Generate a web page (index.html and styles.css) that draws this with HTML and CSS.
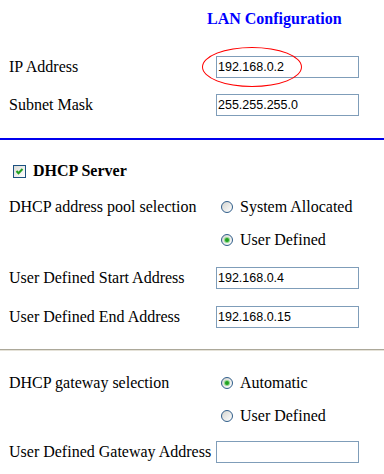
FILE: index.html
```html
<!DOCTYPE html>
<html lang="en">
<head>
    <meta charset="UTF-8">
    <meta name="viewport" content="width=device-width, initial-scale=1.0">
    <title>LAN Configuration</title>
    <link rel="stylesheet" href="styles.css">
</head>
<body>

    <h1 class="title">LAN Configuration</h1>

    <div class="section">
        <div class="row">
            <label for="ip">IP Address</label>
            <div class="field">
                <input class="text-box" id="ip" type="text" value="192.168.0.2">
                <!-- marca vermelha em volta do IP -->
                <span class="ellipse"></span>
            </div>
        </div>
        <div class="row">
            <label for="mask">Subnet Mask</label>
            <div class="field">
                <input class="text-box" id="mask" type="text" value="255.255.255.0">
            </div>
        </div>
    </div>

    <hr class="rule-blue">

    <div class="section dhcp">
        <div class="check-row">
            <span class="checkbox">
                <svg width="11" height="11" viewBox="0 0 11 11">
                    <path d="M2.5 5 L4.5 7.2 L8.5 3" fill="none" stroke="#21a121" stroke-width="2"/>
                </svg>
            </span>
            <strong>DHCP Server</strong>
        </div>

        <div class="row radio-row">
            <label>DHCP address pool selection</label>
            <span class="radio-opt"><span class="radio"></span>System Allocated</span>
        </div>
        <div class="row radio-row">
            <span></span>
            <span class="radio-opt"><span class="radio on"></span>User Defined</span>
        </div>

        <div class="row tall spaced">
            <label for="start">User Defined Start Address</label>
            <div class="field">
                <input class="text-box" id="start" type="text" value="192.168.0.4">
            </div>
        </div>
        <div class="row tall">
            <label for="end">User Defined End Address</label>
            <div class="field">
                <input class="text-box" id="end" type="text" value="192.168.0.15">
            </div>
        </div>
    </div>

    <hr class="rule-gray">

    <div class="section gateway">
        <div class="row radio-row">
            <label>DHCP gateway selection</label>
            <span class="radio-opt"><span class="radio on"></span>Automatic</span>
        </div>
        <div class="row radio-row">
            <span></span>
            <span class="radio-opt"><span class="radio"></span>User Defined</span>
        </div>
        <div class="row tall">
            <label for="gw">User Defined Gateway Address</label>
            <div class="field">
                <input class="text-box" id="gw" type="text" value="">
            </div>
        </div>
    </div>

</body>
</html>
```

FILE: styles.css
```css
body {
    font-family: "Liberation Serif", "Times New Roman", serif;
    font-size: 16px;
    color: #000;
    background-color: #fff;
    margin: 0;
    padding: 0;
}

.title {
    font-size: 16px;
    font-weight: bold;
    color: #0000ff;
    margin: 0;
    padding: 9px 0 0 207px;
    height: 39px;
    line-height: 20px;
}

.section {
    padding-left: 9px;
}

.row {
    display: grid;
    grid-template-columns: 207px 143px;
    align-items: center;
    height: 38px;
}

.row.tall {
    height: 39px;
}

.row.spaced {
    margin-top: 2px;
}

.radio-row {
    height: 33px;
}

.field {
    position: relative;
    height: 22px;
}

.text-box {
    box-sizing: border-box;
    width: 143px;
    height: 22px;
    margin: 0;
    padding: 0 1px;
    border: 1px solid #7f9db9;
    font-family: "Liberation Sans", Arial, sans-serif;
    font-size: 12.5px;
    color: #000;
    background-color: #fff;
    outline: none;
}

.ellipse {
    position: absolute;
    left: -14px;
    top: -9px;
    width: 100px;
    height: 40px;
    box-sizing: border-box;
    border: 1px solid #ff0000;
    border-radius: 50%;
}

.rule-blue {
    margin: 14px 0 0 0;
    border: none;
    height: 2px;
    background-color: #0000ee;
}

.rule-gray {
    margin: 13px 0 0 0;
    border: none;
    border-top: 1px solid #aca899;
    border-bottom: 1px solid #e5e2d8;
    height: 0;
}

.dhcp {
    padding-top: 12px;
}

.gateway {
    padding-top: 15px;
}

.check-row {
    display: flex;
    align-items: center;
    gap: 7px;
    height: 38px;
    padding-left: 4px;
}

.checkbox {
    box-sizing: border-box;
    width: 13px;
    height: 13px;
    border: 1px solid #1c5180;
    background: linear-gradient(135deg, #dcdcd7, #ffffff);
    display: flex;
}

.radio-opt {
    display: flex;
    align-items: center;
    padding-left: 5px;
}

.radio {
    box-sizing: border-box;
    width: 12px;
    height: 12px;
    margin-right: 7px;
    border: 1px solid #2f5d8a;
    border-radius: 50%;
    background: linear-gradient(135deg, #d4d4cf, #ffffff);
    display: flex;
    align-items: center;
    justify-content: center;
}

.radio.on::after {
    content: "";
    width: 4px;
    height: 4px;
    border-radius: 50%;
    background-color: #21a121;
    box-shadow: 0 0 0 1px #8fd88f;
}
```
